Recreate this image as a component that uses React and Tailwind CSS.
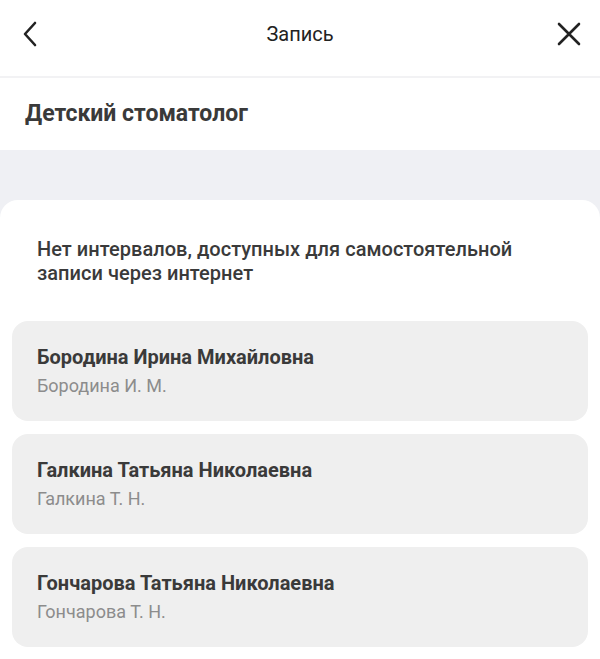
import React from "react";

const doctors = [
  { full: "Бородина Ирина Михайловна", short: "Бородина И. М." },
  { full: "Галкина Татьяна Николаевна", short: "Галкина Т. Н." },
  { full: "Гончарова Татьяна Николаевна", short: "Гончарова Т. Н." },
];

export default function App() {
  return (
    <div className="w-[600px] h-[659px] overflow-hidden bg-white text-[#333333]" style={{ fontFamily: "Roboto, 'Noto Sans', sans-serif" }}>
      <header className="h-[78px] grid grid-cols-[1fr_auto_1fr] items-center px-[20px] pb-[8px] border-b-2 border-[#f2f2f4]">
        <svg width="20" height="26" viewBox="0 0 20 26" className="text-[#222]">
          <path d="M15 2 L5 13 L15 24" fill="none" stroke="currentColor" strokeWidth="2.6" strokeLinecap="round" strokeLinejoin="round" />
        </svg>
        <div className="text-[20px] text-[#222]">Запись</div>
        <svg width="26" height="26" viewBox="0 0 26 26" className="text-[#222] justify-self-end mr-[-2px]">
          <path d="M3 3 L23 23 M23 3 L3 23" fill="none" stroke="currentColor" strokeWidth="2.6" strokeLinecap="round" />
        </svg>
      </header>
      <div className="h-[72px] flex items-center px-[25px]">
        <div className="text-[23px] font-bold text-[#3a3a3a]">Детский стоматолог</div>
      </div>
      <div className="bg-[#eff0f4] pt-[50px]">
        <div className="bg-white rounded-t-[18px] pt-[37px] px-[12px] pb-[20px]">
          <p className="px-[25px] text-[20px] font-medium leading-[24px] tracking-[0.03px] text-[#3a3a3a]">
            Нет интервалов, доступных для самостоятельной<br />записи через интернет
          </p>
          <div className="mt-[36px] flex flex-col gap-[13px]">
            {doctors.map((d) => (
              <div key={d.full} className="h-[100px] rounded-[16px] bg-[#efefef] px-[25px] flex flex-col justify-center">
                <div className="text-[20px] font-bold text-[#3a3a3a] leading-[24px]">{d.full}</div>
                <div className="text-[18px] text-[#8c8c8c] leading-[22px] mt-[6px]">{d.short}</div>
              </div>
            ))}
          </div>
        </div>
      </div>
    </div>
  );
}
